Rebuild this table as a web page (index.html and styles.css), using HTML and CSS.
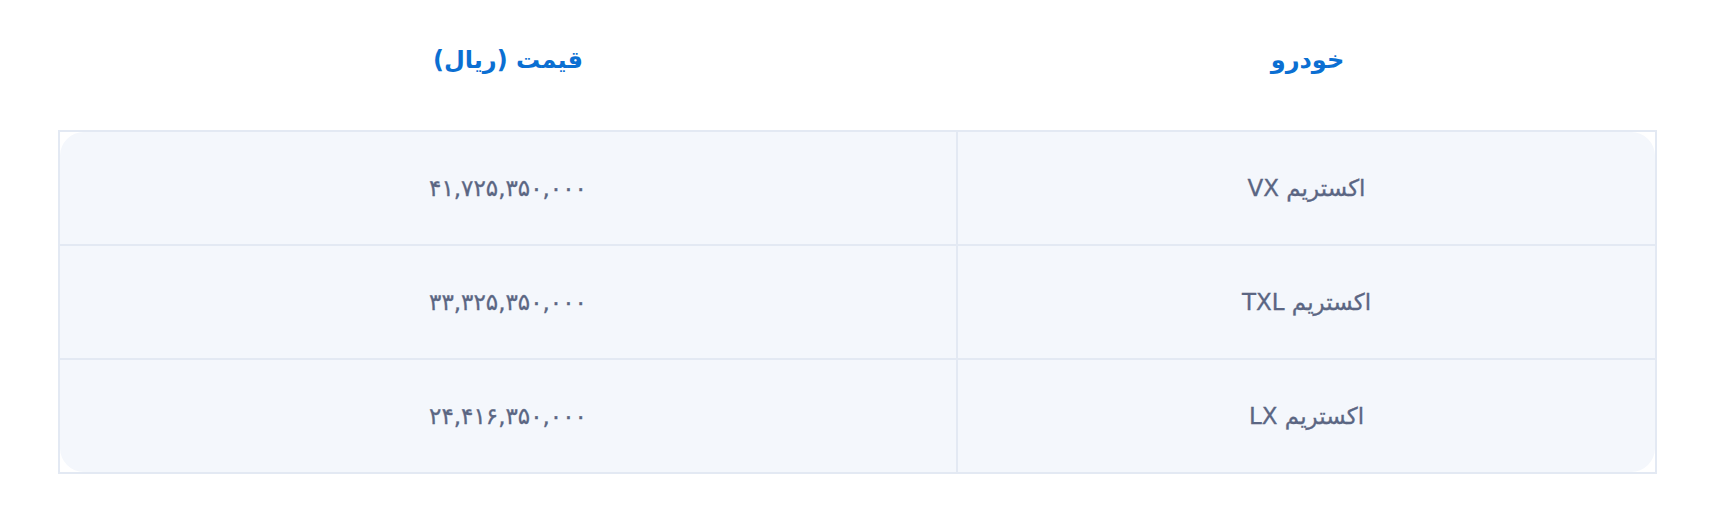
FILE: index.html
```html
<!DOCTYPE html>
<html lang="fa" dir="rtl">
<head>
<meta charset="utf-8">
<title>قیمت خودرو</title>
<link rel="stylesheet" href="styles.css">
</head>
<body>
<div class="page">
  <div class="head">
    <div class="head-cell">خودرو</div>
    <div class="head-cell">قیمت (ریال)</div>
  </div>
  <div class="table">
    <div class="rows">
      <div class="cell c-name">اکستریم VX</div>
      <div class="cell c-price">۴۱,۷۲۵,۳۵۰,۰۰۰</div>
      <div class="cell c-name">اکستریم TXL</div>
      <div class="cell c-price">۳۳,۳۲۵,۳۵۰,۰۰۰</div>
      <div class="cell c-name last">اکستریم LX</div>
      <div class="cell c-price last">۲۴,۴۱۶,۳۵۰,۰۰۰</div>
    </div>
  </div>
</div>
</body>
</html>
```

FILE: styles.css
```css
* { box-sizing: border-box; }
html, body {
  margin: 0;
  padding: 0;
  background: #ffffff;
}
body {
  font-family: "DejaVu Sans", "Noto Sans", sans-serif;
  width: 1726px;
  height: 526px;
  overflow: hidden;
}
.page {
  padding: 0 69px 0 58px;
}
.head {
  display: grid;
  grid-template-columns: 699px 1fr;
  height: 130px;
  padding-bottom: 10px;
  align-items: center;
}
.head-cell {
  text-align: center;
  color: #0b6fd2;
  font-weight: bold;
  font-size: 24px;
  line-height: 1;
}
.table {
  border: 2px solid #e3e9f3;
}
.rows {
  display: grid;
  grid-template-columns: 699px 1fr;
  background: #f4f7fc;
  border-radius: 24px;
}
.cell {
  height: 114px;
  display: flex;
  align-items: center;
  justify-content: center;
  color: #5b6683;
  font-size: 23px;
  -webkit-text-stroke: 0.3px #5b6683;
  border-bottom: 2px solid #e3e9f3;
}
.cell.last {
  height: 112px;
  border-bottom: none;
}
.c-name {
  border-left: 2px solid #e3e9f3;
}
```
